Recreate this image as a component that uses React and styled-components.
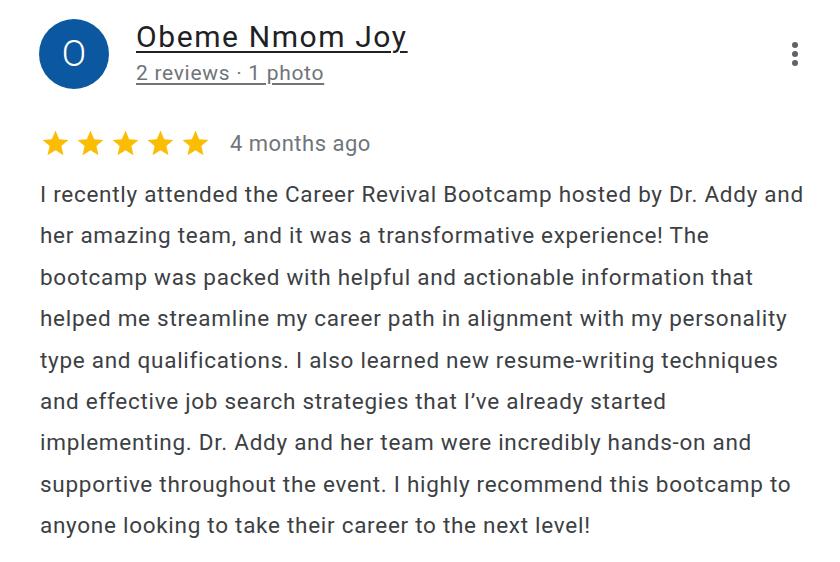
import React from 'react';
import styled, { createGlobalStyle } from 'styled-components';

const GlobalStyle = createGlobalStyle`
  body {
    margin: 0;
    background: #ffffff;
    font-family: Roboto, "Liberation Sans", Arial, sans-serif;
  }
`;

const Card = styled.div`
  width: 840px;
  height: 562px;
  box-sizing: border-box;
  padding: 19px 0 0 40px;
  overflow: hidden;
`;

const Header = styled.div`
  display: flex;
  align-items: flex-start;
`;

const Avatar = styled.div`
  width: 70px;
  height: 70px;
  border-radius: 50%;
  background: #0b57a0;
  color: #ffffff;
  display: flex;
  align-items: center;
  justify-content: center;
  font-size: 36px;
  font-weight: 300;
  flex-shrink: 0;
  margin-left: -1px;
`;

const Author = styled.div`
  display: flex;
  flex-direction: column;
  margin-left: 27px;
  flex: 1;
`;

const Name = styled.a`
  font-size: 30px;
  line-height: 36px;
  letter-spacing: 1.6px;
  color: #202124;
  text-decoration: underline;
  text-decoration-thickness: 2px;
  text-underline-offset: 4px;
`;

const Meta = styled.a`
  font-size: 21px;
  line-height: 26px;
  letter-spacing: 0.7px;
  color: #70757a;
  text-decoration: underline;
  text-underline-offset: 3px;
  margin-top: 5px;
`;

const MenuButton = styled.div`
  display: flex;
  flex-direction: column;
  gap: 3px;
  padding: 23px 42px 0 0;
`;

const Dot = styled.span`
  width: 6px;
  height: 6px;
  border-radius: 50%;
  background: #5f6368;
`;

const RatingRow = styled.div`
  display: flex;
  align-items: center;
  margin-top: 38px;
  height: 32px;
`;

const Stars = styled.div`
  display: flex;
  gap: 4px;
  margin-right: 19px;
`;

const When = styled.span`
  font-size: 22px;
  letter-spacing: 0.5px;
  color: #70757a;
`;

const Body = styled.div`
  margin-top: 15px;
  font-size: 22.5px;
  line-height: 41.4px;
  letter-spacing: 0.72px;
  color: #3c4043;
`;

const Line = styled.div`
  white-space: nowrap;
`;

const Star = () => (
  <svg width="31" height="31" viewBox="0 0 24 24">
    <path
      fill="#fbbc04"
      d="M12 17.27L18.18 21l-1.64-7.03L22 9.24l-7.19-.61L12 2 9.19 8.63 2 9.24l5.46 4.73L5.82 21z"
    />
  </svg>
);

const lines = [
  'I recently attended the Career Revival Bootcamp hosted by Dr. Addy and',
  'her amazing team, and it was a transformative experience! The',
  'bootcamp was packed with helpful and actionable information that',
  'helped me streamline my career path in alignment with my personality',
  'type and qualifications. I also learned new resume-writing techniques',
  'and effective job search strategies that I’ve already started',
  'implementing. Dr. Addy and her team were incredibly hands-on and',
  'supportive throughout the event. I highly recommend this bootcamp to',
  'anyone looking to take their career to the next level!',
];

export default function App() {
  return (
    <Card>
      <GlobalStyle />
      <Header>
        <Avatar>O</Avatar>
        <Author>
          <Name>Obeme Nmom Joy</Name>
          <Meta>2 reviews · 1 photo</Meta>
        </Author>
        <MenuButton>
          <Dot />
          <Dot />
          <Dot />
        </MenuButton>
      </Header>
      <RatingRow>
        <Stars>
          {[0, 1, 2, 3, 4].map((i) => (
            <Star key={i} />
          ))}
        </Stars>
        <When>4 months ago</When>
      </RatingRow>
      <Body>
        {lines.map((text, i) => (
          <Line key={i}>{text}</Line>
        ))}
      </Body>
    </Card>
  );
}
